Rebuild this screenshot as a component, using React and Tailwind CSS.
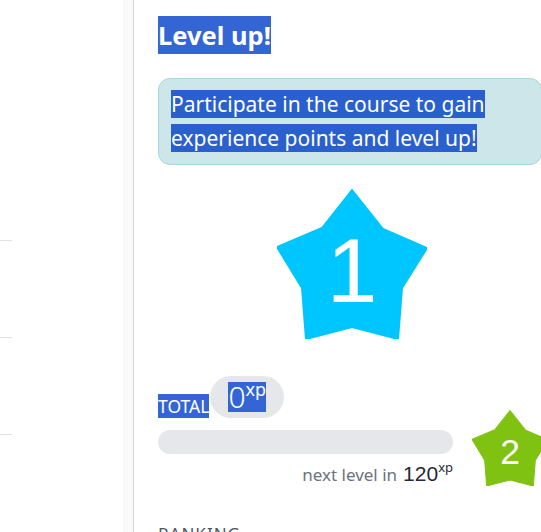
import React from "react";

const STAR = "75,1 45,39 0,58 25,99 29,150 75,138 121,150 125,99 150,59 106,40";

function Star({ size, color, label, fontSize, baseline }) {
  return (
    <svg width={size} height={size} viewBox="0 0 150 150" className="block">
      <polygon points={STAR} fill={color} strokeLinejoin="round" stroke={color} strokeWidth="2" />
      <text
        x="75"
        y={baseline}
        textAnchor="middle"
        fill="#ffffff"
        fontSize={fontSize}
        fontFamily="'Liberation Sans', Arial, sans-serif"
      >
        {label}
      </text>
    </svg>
  );
}

export default function App() {
  const sans = { fontFamily: "'Noto Sans', 'Open Sans', sans-serif" };
  return (
    <div className="flex w-[541px] h-[532px] overflow-hidden bg-white" style={sans}>
      {/* left column */}
      <div className="w-[123px] shrink-0 flex flex-col pt-[240px] gap-[96px]">
        <div className="w-[12px] h-px bg-[#dee2e6]" />
        <div className="w-[12px] h-px bg-[#dee2e6]" />
        <div className="w-[12px] h-px bg-[#dee2e6]" />
      </div>
      {/* divider strip */}
      <div className="w-[11px] shrink-0 bg-[#f8f9fa] border-r border-[#d4d4d4]" />
      {/* content */}
      <div className="w-[432px] shrink-0 pl-[24px] pr-[24px] pt-[16px] flex flex-col">
        <div className="flex">
          <span className="bg-[#3366d4] text-white font-bold text-[25.5px] leading-[38px]">
            Level up!
          </span>
        </div>

        <div className="mt-[24px] w-[384px] rounded-[12px] border border-[#a9d6dd] bg-[#cce6ea] pl-[12px] pr-[12px] pt-[9px] pb-[9px]">
          <p className="text-[21px] leading-[33.5px] text-white">
            <span className="bg-[#2a60cd]">Participate in the course to gain </span>
            <br />
            <span className="bg-[#2a60cd]">experience points and level up! </span>
          </p>
        </div>

        <div className="mt-[24px] w-[384px] flex justify-center">
          <div className="ml-[4px]">
            <Star size={150} color="#00c6ff" label="1" fontSize={91} baseline={113} />
          </div>
        </div>

        <div className="mt-[37px] flex items-end">
          <span className="bg-[#3366d4] text-white text-[17.5px] leading-[24px]">TOTAL</span>
          <div className="ml-px h-[42px] rounded-full bg-[#e5e7eb] pl-[18px] pr-[18px] pt-[6px]">
            <span className="inline-flex items-start bg-[#3366d4] text-white h-[30px]">
              <span className="text-[30px] leading-[30px] font-light">0</span>
              <span className="text-[18px] leading-[14px] self-start">xp</span>
            </span>
          </div>
        </div>

        <div className="mt-[12px] flex items-start w-[420px]">
          <div className="w-[295px] shrink-0 flex flex-col">
            <div className="h-[24px] rounded-full bg-[#e5e7eb]" />
            <div className="mt-[8px] flex justify-end items-baseline">
              <span className="text-[17px] text-[#6b7280]">next level in</span>
              <span className="ml-[6px] text-[21px] text-[#1f2937] leading-[24px]" style={{ fontFamily: "'Liberation Sans', Arial, sans-serif" }}>120</span>
              <span className="text-[13px] text-[#1f2937] self-start -mt-[4px]">xp</span>
            </div>
          </div>
          <div className="ml-[19px] -mt-[20px] shrink-0">
            <Star size={76} color="#80c212" label="2" fontSize={70} baseline={106} />
          </div>
        </div>

        <div className="mt-[33px] text-[17px] text-[#4b5563] tracking-[1px]">RANKING</div>
      </div>
    </div>
  );
}
